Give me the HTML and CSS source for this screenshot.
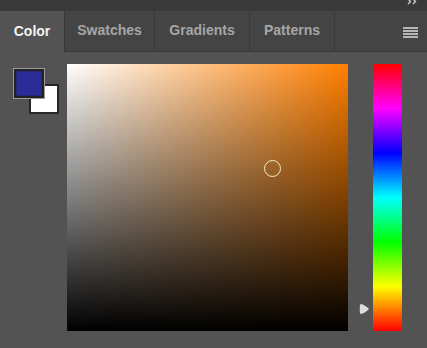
FILE: index.html
```html
<!DOCTYPE html>
<html lang="en">
    <head>
        <meta charset="UTF-8" />
        <title>Color</title>
        <link rel="stylesheet" href="styles.css">
    </head>
    <body>
        <div class="panel">
            <div class="topbar">
                <svg class="collapse" width="11" height="6" viewBox="0 0 11 6">
                    <path d="M1 0 L3.5 2.5 L1 5 M6 0 L8.5 2.5 L6 5" fill="none" stroke="#c8c8c8" stroke-width="1.4"/>
                </svg>
            </div>

            <!-- tabs -->
            <nav class="tabs">
                <a class="tab active" style="width: 64px">Color</a>
                <a class="tab" style="width: 90px">Swatches</a>
                <a class="tab" style="width: 95px">Gradients</a>
                <a class="tab" style="width: 85px">Patterns</a>
                <div class="tab filler">
                    <div class="menu">
                        <span></span><span></span><span></span><span></span>
                    </div>
                </div>
            </nav>

            <main class="picker">
                <div class="swatches">
                    <div class="bg-swatch"></div>
                    <div class="fg-swatch"><div class="fg-fill"></div></div>
                </div>
                <div class="field">
                    <div class="cursor"></div>
                </div>
                <div class="hue">
                    <svg class="hue-arrow" width="11" height="12" viewBox="0 0 11 12">
                        <path d="M2.5 1 C1.2 1 0.8 2 0.8 3 L0.8 9 C0.8 10 1.2 11 2.5 11 C3.5 11 9.8 7 9.8 6 C9.8 5 3.5 1 2.5 1 Z" fill="#dcdcdc"/>
                    </svg>
                </div>
            </main>
        </div>
    </body>
</html>
```

FILE: styles.css
```css
* {
    margin: 0;
    padding: 0;
    box-sizing: border-box;
}
body {
    font-family: "Liberation Sans", Arial, sans-serif;
    background-color: #535353;
    width: 427px;
    height: 348px;
    overflow: hidden;
}
.topbar {
    height: 11px;
    background-color: #3a3a3a;
    position: relative;
}
.collapse {
    position: absolute;
    right: 9px;
    top: -1px;
}
.tabs {
    display: flex;
    height: 41px;
    background-color: #444;
}
.tab {
    display: flex;
    align-items: center;
    justify-content: center;
    height: 41px;
    font-size: 14px;
    font-weight: bold;
    color: #a6a6a6;
    border-left: 1px solid #393939;
    border-bottom: 1px solid #393939;
    padding-bottom: 2px;
}
.tab.active {
    background-color: #535353;
    color: #f2f2f2;
    border-left: none;
    border-bottom: none;
}
.filler {
    flex: 1;
    justify-content: flex-end;
    padding-right: 9px;
}
.menu {
    display: flex;
    flex-direction: column;
    gap: 1px;
    margin-top: 4px;
}
.menu span {
    display: block;
    width: 15px;
    height: 2px;
    background-color: #b6b6b6;
}
.picker {
    display: flex;
    padding: 12px 0 0 13px;
}
.swatches {
    position: relative;
    width: 46px;
    height: 46px;
    margin-top: 4px;
    margin-right: 8px;
}
.fg-swatch {
    position: absolute;
    left: 0;
    top: 0;
    width: 32px;
    height: 31px;
    border: 1px solid #9c9c9c;
    background-color: #222;
    padding: 2px;
}
.fg-fill {
    width: 100%;
    height: 100%;
    background-color: #2b2d96;
    border: 1px solid #25267a;
}
.bg-swatch {
    position: absolute;
    left: 16px;
    top: 16px;
    width: 30px;
    height: 30px;
    border: 2px solid #262626;
    background-color: #fff;
}
.field {
    position: relative;
    width: 281px;
    height: 267px;
    background:
        linear-gradient(to top, #000, rgba(0, 0, 0, 0)),
        linear-gradient(to right, #fff, hsl(30, 100%, 50%));
}
.cursor {
    position: absolute;
    left: 197px;
    top: 96px;
    width: 17px;
    height: 17px;
    border: 1px solid #f4ecc6;
    border-radius: 50%;
}
.hue {
    position: relative;
    width: 29px;
    height: 267px;
    margin-left: 25px;
    background: linear-gradient(to bottom,
        #f00 0%, #f0f 16.67%, #00f 33.33%, #0ff 50%,
        #0f0 66.67%, #ff0 83.33%, #f00 100%);
}
.hue-arrow {
    position: absolute;
    left: -14px;
    top: 239px;
}
```
